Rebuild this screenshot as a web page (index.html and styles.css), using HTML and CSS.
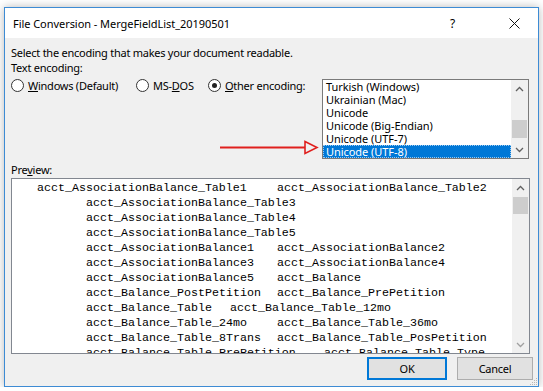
FILE: index.html
```html
<!DOCTYPE html>
<html>
<head>
<meta charset="utf-8">
<link rel="stylesheet" href="styles.css">
</head>
<body>
<div class="window">
  <div class="titlebar">
    <span class="title">File Conversion - MergeFieldList_20190501</span>
    <span class="help">?</span>
    <svg class="close" width="11" height="11" viewBox="0 0 11 11"><path d="M0.5 0.5 L10.5 10.5 M10.5 0.5 L0.5 10.5" stroke="#111" stroke-width="1" fill="none"/></svg>
  </div>
  <div class="content">
    <div class="line">Select the encoding that makes your document readable.</div>
    <div class="line">Text encoding:</div>
    <div class="encrow">
      <div class="radio r1"><span class="dot"></span><span><u>W</u>indows (Default)</span></div>
      <div class="radio r2"><span class="dot"></span><span>MS-<u>D</u>OS</span></div>
      <div class="radio r3"><span class="dot checked"></span><span><u>O</u>ther encoding:</span></div>
      <div class="listbox">
        <ul class="items">
          <li>Turkish (Windows)</li>
          <li>Ukrainian (Mac)</li>
          <li>Unicode</li>
          <li>Unicode (Big-Endian)</li>
          <li>Unicode (UTF-7)</li>
          <li class="selected">Unicode (UTF-8)</li>
        </ul>
        <div class="vscroll">
          <div class="sbtn"><svg width="9" height="6" viewBox="0 0 9 6"><path d="M1 5 L4.5 1.5 L8 5" stroke="#606060" stroke-width="1.3" fill="none"/></svg></div>
          <div class="track"><div class="thumb lthumb"></div></div>
          <div class="sbtn"><svg width="9" height="6" viewBox="0 0 9 6"><path d="M1 1 L4.5 4.5 L8 1" stroke="#606060" stroke-width="1.3" fill="none"/></svg></div>
        </div>
      </div>
    </div>
    <div class="line plabel">Pre<u>v</u>iew:</div>
    <div class="preview">
      <div class="ptext">
        <div class="row"><span class="c w240">acct_AssociationBalance_Table1</span><span>acct_AssociationBalance_Table2</span></div>
        <div class="row in"><span>acct_AssociationBalance_Table3</span></div>
        <div class="row in"><span>acct_AssociationBalance_Table4</span></div>
        <div class="row in"><span>acct_AssociationBalance_Table5</span></div>
        <div class="row in"><span class="c w191">acct_AssociationBalance1</span><span>acct_AssociationBalance2</span></div>
        <div class="row in"><span class="c w191">acct_AssociationBalance3</span><span>acct_AssociationBalance4</span></div>
        <div class="row in"><span class="c w191">acct_AssociationBalance5</span><span>acct_Balance</span></div>
        <div class="row in"><span class="c w191">acct_Balance_PostPetition</span><span>acct_Balance_PrePetition</span></div>
        <div class="row in"><span class="c w144">acct_Balance_Table</span><span>acct_Balance_Table_12mo</span></div>
        <div class="row in"><span class="c w191">acct_Balance_Table_24mo</span><span>acct_Balance_Table_36mo</span></div>
        <div class="row in"><span class="c w191">acct_Balance_Table_8Trans</span><span>acct_Balance_Table_PosPetition</span></div>
        <div class="row in"><span class="c w238">acct_Balance_Table_PrePetition</span><span>acct_Balance_Table_Type</span></div>
      </div>
      <div class="vscroll">
        <div class="sbtn"><svg width="9" height="6" viewBox="0 0 9 6"><path d="M1 5 L4.5 1.5 L8 5" stroke="#606060" stroke-width="1.3" fill="none"/></svg></div>
        <div class="track"><div class="thumb pthumb"></div></div>
        <div class="sbtn"><svg width="9" height="6" viewBox="0 0 9 6"><path d="M1 1 L4.5 4.5 L8 1" stroke="#a0a0a0" stroke-width="1.3" fill="none"/></svg></div>
      </div>
    </div>
    <div class="buttons">
      <div class="btn ok">OK</div>
      <div class="btn cancel">Cancel</div>
    </div>
  </div>
  <svg class="arrow" width="100" height="15" viewBox="0 0 100 15"><path d="M0 7.5 L85 7.5" stroke="#e0201e" stroke-width="2" fill="none"/><path d="M85 1.5 L97 7.5 L85 13.5 Z" stroke="#e0201e" stroke-width="1.6" fill="none"/></svg>
  <svg class="grip" width="10" height="10" viewBox="0 0 10 10"><g fill="#b8b8b8"><rect x="8" y="2" width="1" height="1"/><rect x="6" y="4" width="1" height="1"/><rect x="8" y="4" width="1" height="1"/><rect x="4" y="6" width="1" height="1"/><rect x="6" y="6" width="1" height="1"/><rect x="8" y="6" width="1" height="1"/><rect x="2" y="8" width="1" height="1"/><rect x="4" y="8" width="1" height="1"/><rect x="6" y="8" width="1" height="1"/><rect x="8" y="8" width="1" height="1"/></g></svg>
</div>
</body>
</html>
```

FILE: styles.css
```css
html, body {
  margin: 0;
  padding: 0;
}
body {
  background: #ffffff;
  font-family: "Segoe UI", "Noto Sans", "Open Sans", sans-serif;
  font-size: 11px;
  letter-spacing: -0.25px;
  color: #000;
}
.window {
  position: relative;
  margin: 7px 0 0 4px;
  width: 533px;
  height: 378px;
  border: 1px solid #3d8bd4;
  box-shadow: 0 0 9px rgba(0, 0, 0, 0.28);
  background: #f0f0f0;
  display: flex;
  flex-direction: column;
}
.titlebar {
  height: 30px;
  background: #fff;
  display: flex;
  align-items: center;
  flex-shrink: 0;
}
.title {
  padding-left: 8px;
  letter-spacing: -0.05px;
}
.help {
  margin-left: auto;
  font-size: 12px;
}
.close {
  margin-left: 54px;
  margin-right: 18px;
  display: block;
}
.content {
  flex: 1;
  padding: 7px 0 0 6px;
  line-height: 15px;
  display: flex;
  flex-direction: column;
}
.line {
  height: 15px;
  white-space: nowrap;
}
.encrow {
  display: flex;
  align-items: flex-start;
  height: 83px;
}
.radio {
  margin-top: 4px;
  display: flex;
  align-items: center;
  height: 13px;
  gap: 4px;
  white-space: nowrap;
}
.r1 { width: 125px; }
.r2 { width: 72px; }
.r3 { width: 114px; }
.dot {
  box-sizing: border-box;
  width: 13px;
  height: 13px;
  border: 1px solid #333;
  border-radius: 50%;
  background: #fff;
  display: flex;
  align-items: center;
  justify-content: center;
  flex-shrink: 0;
}
.dot.checked::after {
  content: "";
  width: 5px;
  height: 5px;
  border-radius: 50%;
  background: #222;
}
.listbox {
  box-sizing: border-box;
  margin-top: 4px;
  width: 207px;
  height: 80px;
  border: 1px solid #7a7a7a;
  background: #fff;
  display: flex;
}
.items {
  list-style: none;
  margin: 0;
  padding: 0;
  flex: 1;
}
.items li {
  height: 13px;
  line-height: 13px;
  padding-left: 3px;
  letter-spacing: -0.05px;
  white-space: nowrap;
}
.items li.selected {
  background: #0078d7;
  color: #fff;
  outline: 1px dotted #9ccaf0;
  outline-offset: -1px;
}
.vscroll {
  width: 17px;
  background: #f0f0f0;
  display: flex;
  flex-direction: column;
  flex-shrink: 0;
}
.sbtn {
  height: 17px;
  display: flex;
  align-items: center;
  justify-content: center;
  flex-shrink: 0;
}
.track {
  flex: 1;
}
.thumb {
  background: #cdcdcd;
  margin: 0 1px;
}
.lthumb {
  margin-top: 23px;
  height: 18px;
}
.pthumb {
  margin-top: 1px;
  height: 17px;
}
.plabel {
  margin-top: 4px;
}
.preview {
  box-sizing: border-box;
  margin-top: 1px;
  width: 519px;
  height: 176px;
  border: 1px solid #828790;
  background: #fff;
  display: flex;
}
.ptext {
  flex: 1;
  overflow: hidden;
  padding: 2px 0 0 25px;
  font-family: "Liberation Mono", "Courier New", monospace;
  font-size: 11.67px;
  letter-spacing: 0;
  line-height: 15px;
  color: #000;
}
.row {
  height: 15px;
  white-space: pre;
}
.row.in {
  padding-left: 49px;
}
.c {
  display: inline-block;
}
.w240 { width: 240px; }
.w191 { width: 191px; }
.w144 { width: 144px; }
.w238 { width: 238px; }
.buttons {
  margin-top: 3px;
  margin-right: 5px;
  display: flex;
  justify-content: flex-end;
  gap: 10px;
}
.btn {
  box-sizing: border-box;
  height: 23px;
  background: #e1e1e1;
  border: 1px solid #adadad;
  display: flex;
  align-items: center;
  justify-content: center;
}
.ok {
  width: 80px;
  border: 2px solid #0078d7;
}
.cancel {
  width: 76px;
}
.arrow {
  position: absolute;
  left: 215px;
  top: 132px;
}
.grip {
  position: absolute;
  right: 0;
  bottom: 0;
}
```
